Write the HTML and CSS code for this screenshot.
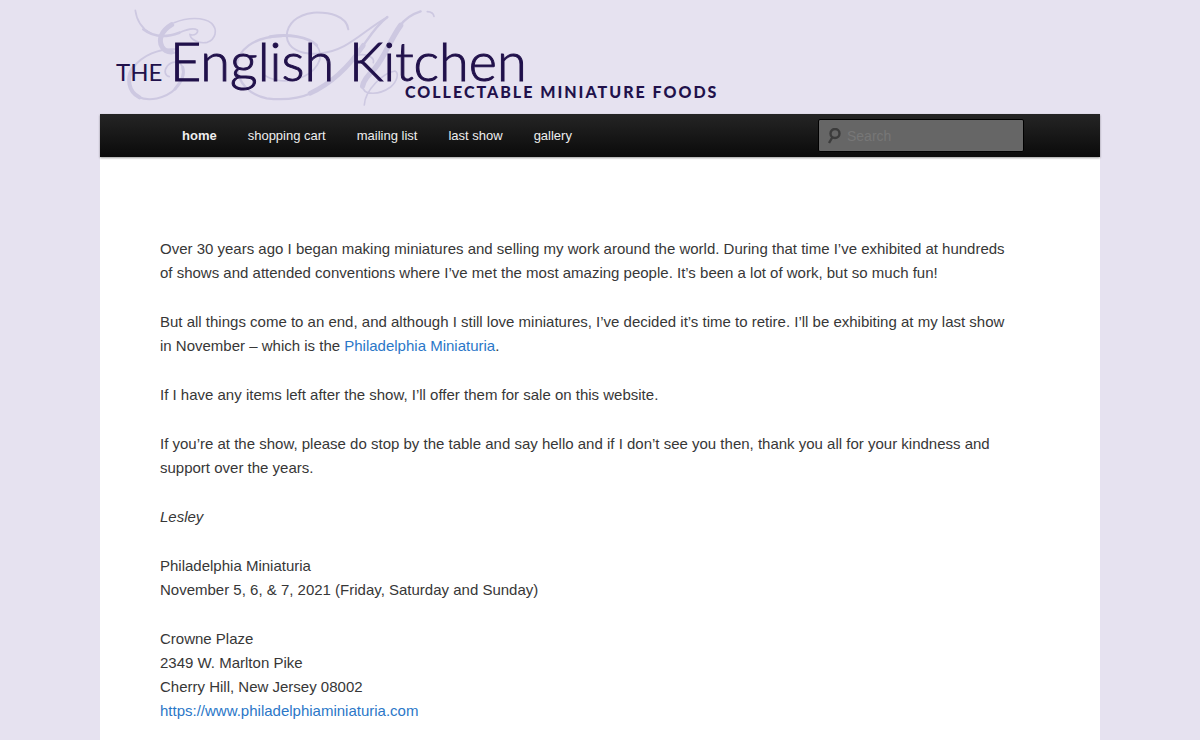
FILE: index.html
```html
<!DOCTYPE html>
<html lang="en">
<head>
<meta charset="utf-8">
<meta name="viewport" content="width=device-width, initial-scale=1">
<title>The English Kitchen</title>
<link rel="stylesheet" href="styles.css">
</head>
<body>
<div class="page">
  <header class="branding">
    <a class="logo-link" href="#" aria-label="The English Kitchen, collectable miniature foods">
      <svg class="logo" viewBox="0 0 640 114" width="640" height="114">
        <g class="flourish" transform="scale(.3333)">
          <path stroke-width="5" d="M106 31C110 62 125 85 152 100"/>
          <path stroke-width="8" d="M130 88C160 112 200 112 238 98"/>
          <path stroke-width="5" d="M238 98C262 88 280 82 292 90C296 98 285 108 270 104C272 120 298 132 322 127C346 118 355 90 335 70C310 50 262 52 222 68"/>
          <path stroke-width="15" d="M215 74C185 92 174 118 186 140C192 150 200 155 214 156"/>
          <path stroke-width="6" d="M210 158C222 161 236 156 228 148C180 144 125 165 98 205"/>
          <path stroke-width="12" d="M98 205C80 235 84 275 118 292"/>
          <path stroke-width="6" d="M115 291C145 304 195 298 228 265"/>
          <path stroke-width="9" d="M225 267C248 242 255 222 248 202"/>
          <path stroke-width="5" d="M249 205C243 183 218 180 202 198C190 214 196 228 208 230"/>
          <path stroke-width="6" d="M745 88C740 48 690 36 640 38C590 44 562 72 560 108C563 145 600 165 655 161C745 154 790 90 862 52"/>
          <path stroke-width="7" d="M862 51C830 75 810 108 786 142"/>
          <path stroke-width="14" d="M790 136C755 188 700 248 630 280"/>
          <path stroke-width="7" d="M635 279C590 299 540 300 500 295C450 285 414 250 410 200C412 150 460 110 545 108"/>
          <path stroke-width="9" d="M510 110C565 101 625 110 650 136"/>
          <path stroke-width="5" d="M648 134C680 172 648 220 590 238C550 248 510 240 492 224"/>
          <path stroke-width="7" d="M962 34C930 44 910 62 898 80"/>
          <path stroke-width="16" d="M902 76C870 120 855 170 825 205C805 224 790 240 788 258"/>
          <path stroke-width="5" d="M786 256C790 290 840 284 872 261C892 244 898 219 885 213C850 218 795 270 793 315M775 165C800 160 825 172 820 188M982 35Q1000 36 1002 49"/>
        </g>
        <text class="logo-the" x="16" y="81">THE</text>
        <text class="logo-name" x="70" y="81">English Kitchen</text>
        <text class="logo-tag" x="305" y="98">COLLECTABLE MINIATURE FOODS</text>
      </svg>
    </a>
  </header>
  <nav class="access" aria-label="Main">
    <ul class="menu">
      <li><a class="current" href="#">home</a></li>
      <li><a href="#">shopping cart</a></li>
      <li><a href="#">mailing list</a></li>
      <li><a href="#">last show</a></li>
      <li><a href="#">gallery</a></li>
    </ul>
    <form class="search" role="search">
      <svg class="search-icon" viewBox="0 0 14 16" width="14" height="16" aria-hidden="true">
        <circle cx="8" cy="5.5" r="4.5"/><path d="M5.5 9L2 15"/>
      </svg>
      <input type="search" aria-label="Search" placeholder="Search">
    </form>
  </nav>
  <main class="content">
    <p>Over 30 years ago I began making miniatures and selling my work around the world. During that time I’ve exhibited at hundreds of shows and attended conventions where I’ve met the most amazing people. It’s been a lot of work, but so much fun!</p>
    <p>But all things come to an end, and although I still love miniatures, I’ve decided it’s time to retire. I’ll be exhibiting at my last show in November – which is the <a href="#">Philadelphia Miniaturia</a>.</p>
    <p>If I have any items left after the show, I’ll offer them for sale on this website.</p>
    <p>If you’re at the show, please do stop by the table and say hello and if I don’t see you then, thank you all for your kindness and support over the years.</p>
    <p><em>Lesley</em></p>
    <p>Philadelphia Miniaturia<br>November 5, 6, &amp; 7, 2021 (Friday, Saturday and Sunday)</p>
    <p>Crowne Plaze<br>2349 W. Marlton Pike<br>Cherry Hill, New Jersey 08002<br><a href="#">https://www.philadelphiaminiaturia.com</a></p>
  </main>
</div>
</body>
</html>
```
FILE: styles.css
```css
* {
  box-sizing: border-box;
}

body {
  margin: 0;
  background: #e6e2f0;
  color: #373737;
  font: 15px/24px "Liberation Sans", Arial, sans-serif;
}

a {
  color: #2b77c8;
  text-decoration: none;
}

.page {
  max-width: 1000px;
  margin: 0 auto;
}

.logo-link,
.logo {
  display: block;
  max-width: 100%;
}

.flourish {
  fill: none;
  stroke: #cdc8e1;
  stroke-linecap: round;
}

.logo text {
  fill: #21114b;
}

.logo .logo-the {
  font: 400 24px Lato, sans-serif;
}

.logo .logo-name {
  font: 300 54px Lato, sans-serif;
  stroke: #21114b;
  stroke-width: 1px;
}

.logo .logo-tag {
  font: 900 16px Lato, sans-serif;
  letter-spacing: 2px;
}

.access {
  position: relative;
  display: flex;
  flex-wrap: wrap;
  align-items: center;
  justify-content: space-between;
  min-height: 43px;
  padding: 0 76px 0 67px;
  background: linear-gradient(#252525, #0a0a0a);
  box-shadow: 0 1px 2px rgba(0, 0, 0, 0.4);
}

.menu {
  display: flex;
  flex-wrap: wrap;
  margin: 0;
  padding: 0;
  list-style: none;
  font-size: 13px;
}

.menu a {
  display: block;
  padding: 0 16px 0 15px;
  color: #eee;
  line-height: 43px;
}

.menu .current {
  font-weight: bold;
}

.search {
  display: flex;
  align-items: center;
  gap: 6px;
  width: 206px;
  height: 33px;
  padding: 0 8px;
  border: 1px solid #000;
  border-radius: 2px;
  background: #666;
}

.search-icon {
  flex: none;
  fill: none;
  stroke: #3c3c3c;
  stroke-width: 2.4;
}

.search input {
  flex: 1;
  min-width: 0;
  padding: 0;
  border: 0;
  outline: 0;
  background: transparent;
  color: #ddd;
  font: 14px/20px "Liberation Sans", Arial, sans-serif;
}

.search input::placeholder {
  color: #777;
}

.content {
  min-height: 583px;
  padding: 80px 90px 0 60px;
  background: #fff;
}

.content p {
  margin: 0 0 25px;
}
```
